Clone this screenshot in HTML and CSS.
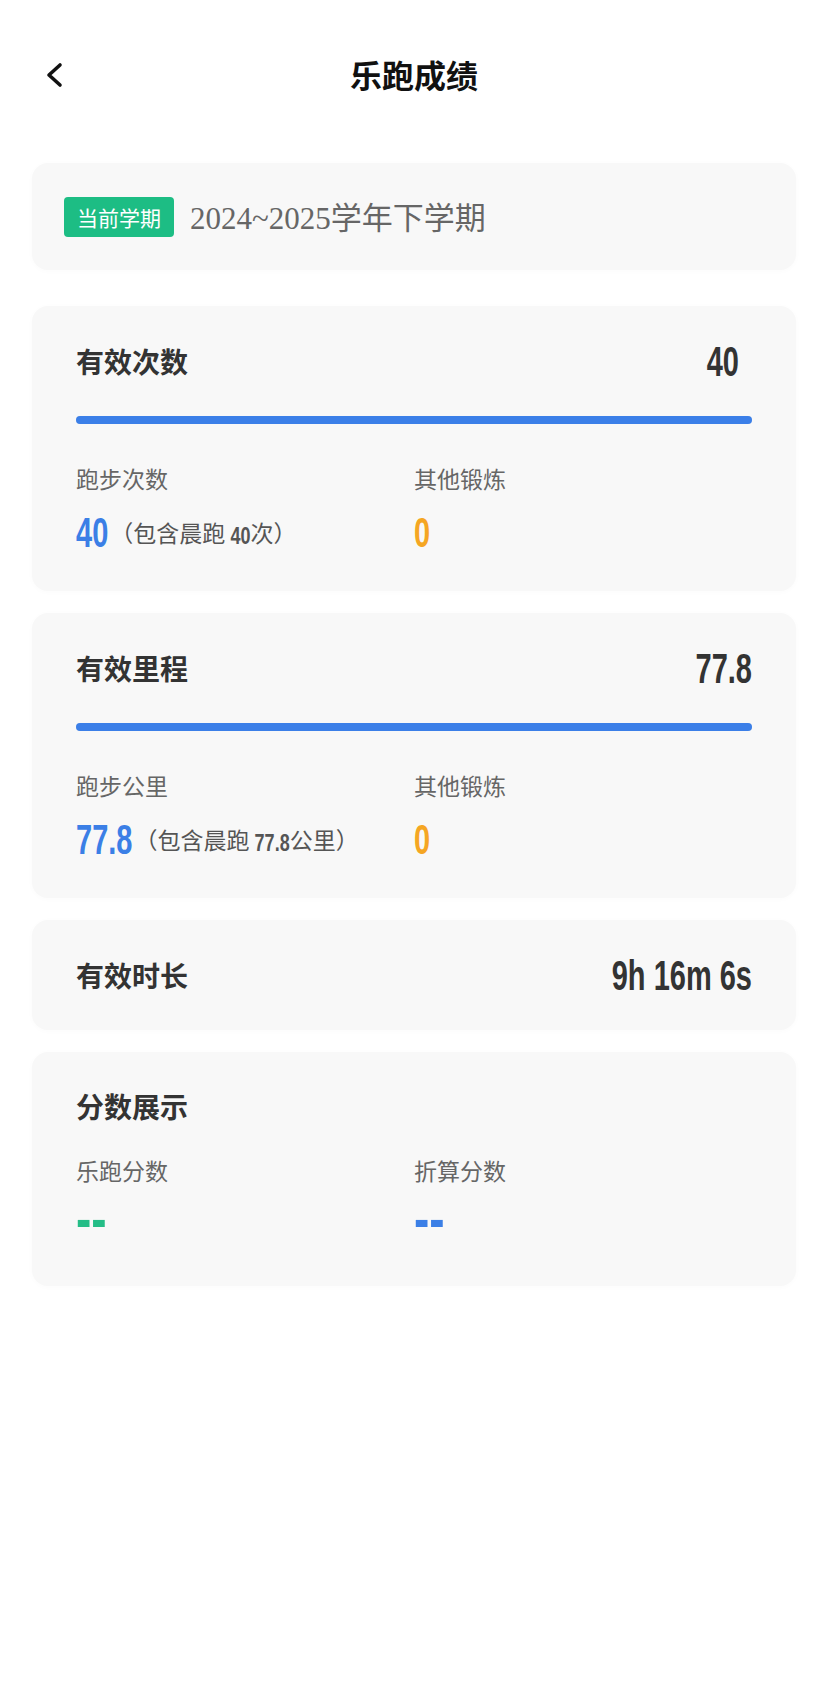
FILE: index.html
```html
<!DOCTYPE html>
<html lang="zh-CN">
<head>
<meta charset="utf-8">
<title>乐跑成绩</title>
<link rel="stylesheet" href="styles.css">
</head>
<body>
<div class="page">
  <header class="topbar">
    <div class="back">
      <svg width="20" height="26" viewBox="0 0 20 26"><polyline points="16,3 5,13 16,23" fill="none" stroke="#111" stroke-width="3.6" stroke-linecap="round" stroke-linejoin="round"/></svg>
    </div>
    <h1 class="title">乐跑成绩</h1>
    <div></div>
  </header>

  <main class="cards">
    <section class="card term">
      <span class="tag">当前学期</span>
      <span class="term-text">2024~2025学年下学期</span>
    </section>

    <section class="card stat">
      <div class="row">
        <h2 class="card-title">有效次数</h2>
        <span class="num big shift">40</span>
      </div>
      <div class="bar"><div class="fill" style="width:100%"></div></div>
      <div class="cols">
        <div class="col">
          <div class="label">跑步次数</div>
          <div class="val"><span class="num big blue">40</span><span class="note">（包含晨跑 <span class="num small">40</span>次）</span></div>
        </div>
        <div class="col">
          <div class="label">其他锻炼</div>
          <div class="val"><span class="num big orange">0</span></div>
        </div>
      </div>
    </section>

    <section class="card stat">
      <div class="row">
        <h2 class="card-title">有效里程</h2>
        <span class="num big">77.8</span>
      </div>
      <div class="bar"><div class="fill" style="width:100%"></div></div>
      <div class="cols">
        <div class="col">
          <div class="label">跑步公里</div>
          <div class="val"><span class="num big blue">77.8</span><span class="note">（包含晨跑 <span class="num small">77.8</span>公里）</span></div>
        </div>
        <div class="col">
          <div class="label">其他锻炼</div>
          <div class="val"><span class="num big orange">0</span></div>
        </div>
      </div>
    </section>

    <section class="card single">
      <div class="row">
        <h2 class="card-title">有效时长</h2>
        <span class="num big">9h 16m 6s</span>
      </div>
    </section>

    <section class="card score">
      <h2 class="card-title">分数展示</h2>
      <div class="cols">
        <div class="col">
          <div class="label">乐跑分数</div>
          <div class="val"><span class="num dash green">--</span></div>
        </div>
        <div class="col">
          <div class="label">折算分数</div>
          <div class="val"><span class="num dash blue">--</span></div>
        </div>
      </div>
    </section>
  </main>
</div>
</body>
</html>
```

FILE: styles.css
```css
* { box-sizing: border-box; }
html, body { margin: 0; padding: 0; background: #ffffff; }
body {
  font-family: "Noto Sans CJK SC", "Noto Sans", sans-serif;
  color: #333;
}
.page { width: 828px; min-height: 1695px; }

.topbar {
  height: 148px;
  display: grid;
  grid-template-columns: 1fr auto 1fr;
  align-items: center;
}
.back { padding-left: 44px; display: flex; align-items: center; padding-top: 2px; }
.back svg { display: block; }
.title {
  margin: 0;
  font-size: 32px;
  font-weight: 700;
  color: #111;
  line-height: 40px;
}

.cards { padding: 15px 32px 0; display: flex; flex-direction: column; gap: 22px; }
.card {
  background: #f8f8f8;
  border-radius: 16px;
  box-shadow: 0 1px 6px rgba(0,0,0,0.02);
}
.card.term {
  height: 107px;
  display: flex;
  align-items: center;
  padding: 0 32px;
  margin-bottom: 14px;
}
.tag {
  background: #1dbd84;
  color: #fff;
  font-size: 21px;
  height: 40px;
  line-height: 40px;
  padding: 0 13px;
  border-radius: 4px;
}
.term-text {
  margin-left: 16px;
  font-family: "Liberation Serif", "Noto Sans CJK SC", serif;
  font-size: 31px;
  color: #666;
  margin-top: -3px;
}

.stat { padding: 35px 44px 37px; }
.single { padding: 35px 44px; }
.score { padding: 34px 44px 46px; }

.row { display: flex; justify-content: space-between; align-items: center; height: 40px; }
.card-title { margin: 0; font-size: 28px; font-weight: 700; color: #333; line-height: 40px; }

.num {
  display: inline-block;
  font-family: "Liberation Sans", Arial, sans-serif;
  font-weight: 700;
  transform-origin: 50% 50%;
}
.big { font-size: 29px; line-height: 29px; color: #333; transform: scaleY(1.49); }
.shift { margin-right: 13px; }
.blue { color: #3b7fe6; }
.orange { color: #f5a623; }
.green { color: #25bd87; }
.small { font-size: 18px; line-height: 18px; color: #555; transform: scaleY(1.3); }
.dash { font-size: 46px; line-height: 46px; transform: scaleY(1.3); letter-spacing: 0; }

.bar { margin-top: 35px; height: 8px; border-radius: 4px; background: #e6e6e6; }
.fill { height: 100%; border-radius: 4px; background: #3b7fe8; }

.cols { display: grid; grid-template-columns: 1fr 1fr; margin-top: 39px; }
.score .cols { margin-top: 29px; }
.label { font-size: 23px; line-height: 30px; color: #666; }
.val { margin-top: 17px; display: flex; align-items: center; height: 44px; }
.score .val { margin-top: 11px; }
.note { font-size: 23px; color: #555; margin-left: 2px; }
```
